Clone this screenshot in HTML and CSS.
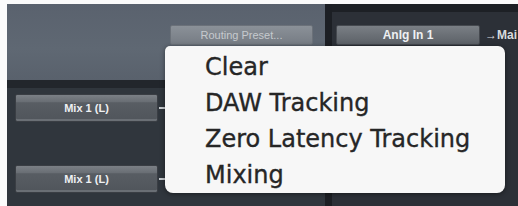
FILE: index.html
```html
<!DOCTYPE html>
<html>
<head>
<meta charset="utf-8">
<link rel="stylesheet" href="styles.css">
</head>
<body>
<div class="screen">
  <div class="top-left">
    <div class="btn preset">Routing Preset...</div>
  </div>
  <div class="right">
    <div class="right-band"></div>
    <div class="right-row">
      <div class="btn anlg">Anlg In 1</div>
      <span class="arrow">&rarr;Mai</span>
    </div>
  </div>
  <div class="bottom-left">
    <div class="mix-row"><div class="btn mix">Mix 1 (L)</div><span class="tick"></span></div>
    <div class="mix-row"><div class="btn mix">Mix 1 (L)</div><span class="tick"></span></div>
  </div>
  <ul class="menu">
    <li>Clear</li>
    <li>DAW Tracking</li>
    <li>Zero Latency Tracking</li>
    <li>Mixing</li>
  </ul>
</div>
</body>
</html>
```

FILE: styles.css
```css
html, body {
  margin: 0;
  padding: 0;
  background: #fbfbfb;
}
body {
  width: 518px;
  height: 206px;
  overflow: hidden;
  font-family: "DejaVu Sans", "Liberation Sans", sans-serif;
}
.screen {
  position: relative;
  margin: 4px 0 0 7px;
  width: 511px;
  height: 202px;
  display: grid;
  grid-template-columns: 318px 1fr;
  grid-template-rows: 76px 1fr;
}
.top-left {
  grid-column: 1;
  grid-row: 1;
  background: linear-gradient(#5a626e, #5f6873 60%, #59616c);
  padding: 21px 0 0 163px;
}
.right {
  grid-column: 2;
  grid-row: 1 / span 2;
  background: #2c3037;
  border-left: 7px solid #1c1f24;
  display: flex;
  flex-direction: column;
}
.right-band {
  height: 8px;
  background: #1d2025;
}
.right-row {
  display: flex;
  align-items: center;
  gap: 5px;
  padding: 13px 0 0 4px;
  white-space: nowrap;
  overflow: hidden;
}
.bottom-left {
  grid-column: 1;
  grid-row: 2;
  background: #30363d;
  border-top: 8px solid #22262c;
  display: flex;
  flex-direction: column;
  gap: 43px;
  padding: 6px 0 0 8px;
}
.btn {
  box-sizing: border-box;
  display: flex;
  align-items: center;
  justify-content: center;
  font-family: "Liberation Sans", Arial, sans-serif;
  font-weight: bold;
  color: #eef0f2;
  border-radius: 2px;
}
.preset {
  width: 143px;
  height: 20px;
  font-size: 11px;
  font-weight: normal;
  color: #c6cace;
  background: linear-gradient(#8b9198, #767c84);
  border: 1px solid #6b7179;
}
.anlg {
  width: 144px;
  height: 20px;
  font-size: 12px;
  background: linear-gradient(#7a7f85, #5c6167);
  border: 1px solid #45494f;
}
.arrow {
  color: #d8dbde;
  font-family: "Liberation Sans", Arial, sans-serif;
  font-size: 12px;
  font-weight: bold;
}
.mix-row {
  display: flex;
  align-items: center;
  gap: 1px;
}
.mix {
  width: 143px;
  height: 28px;
  font-size: 11px;
  background: linear-gradient(#7b8086 0, #6a6f75 25%, #585d63 30%, #50555b 100%);
  border: 1px solid #3a3e44;
  box-shadow: inset 0 -2px 0 #6a6f75;
}
.tick {
  width: 6px;
  height: 2px;
  background: #c8ccd0;
}
.menu {
  position: absolute;
  left: 158px;
  top: 42px;
  width: 340px;
  height: 147px;
  box-sizing: border-box;
  margin: 0;
  padding: 3px 0 0 40px;
  list-style: none;
  background: #f7f7f7;
  border-radius: 5px 7px 8px 8px;
  box-shadow: 0 1px 5px rgba(0, 0, 0, 0.45);
  font-family: "DejaVu Sans", sans-serif;
  font-size: 24px;
  line-height: 36px;
  color: #262626;
  -webkit-text-stroke: 0.35px #262626;
}
```
